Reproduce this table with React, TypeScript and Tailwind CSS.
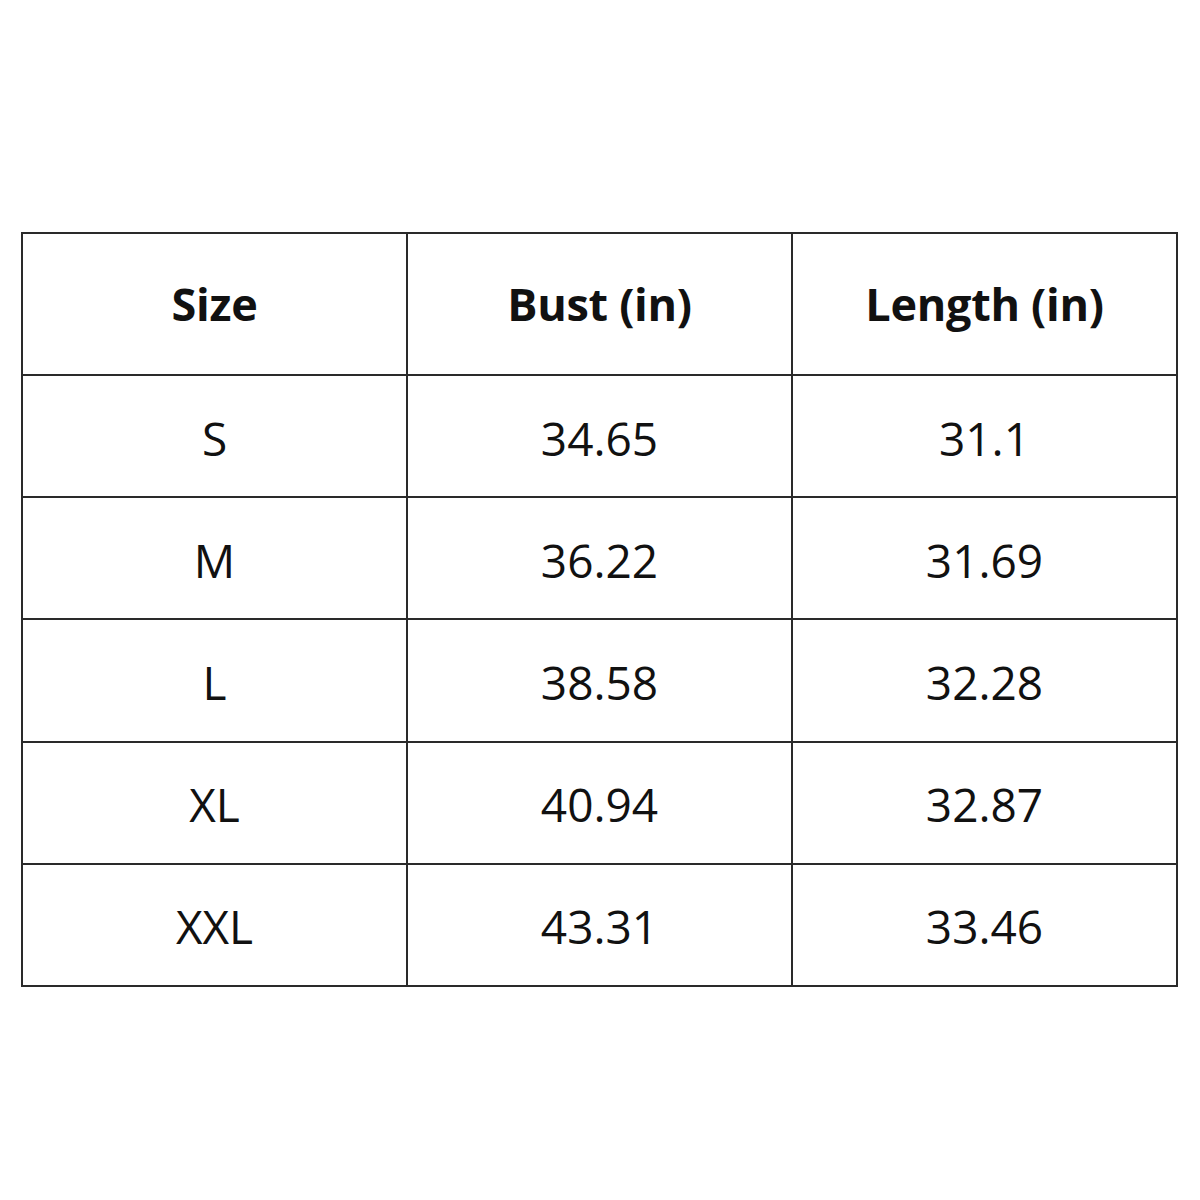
import React from "react";

const rows: [string, string, string][] = [
  ["S", "34.65", "31.1"],
  ["M", "36.22", "31.69"],
  ["L", "38.58", "32.28"],
  ["XL", "40.94", "32.87"],
  ["XXL", "43.31", "33.46"],
];

export default function App() {
  const font = { fontFamily: '"Open Sans", "Noto Sans", sans-serif' };
  return (
    <div className="w-[1200px] h-[1200px] bg-white pt-[232px] pl-[21px]" style={font}>
      <div className="w-[1157px] h-[755px] grid grid-cols-3 grid-rows-[142px_repeat(5,1fr)] border-l-2 border-t-2 border-[#2a2a2a] text-[#111]">
        {["Size", "Bust (in)", "Length (in)"].map((h) => (
          <div
            key={h}
            className="flex items-center justify-center border-r-2 border-b-2 border-[#2a2a2a] text-[45px] font-bold pt-[0px] tracking-[-0.3px]"
          >
            {h}
          </div>
        ))}
        {rows.map((r) =>
          r.map((c, i) => (
            <div
              key={r[0] + i}
              className="flex items-center justify-center border-r-2 border-b-2 border-[#2a2a2a] text-[46px] pt-[4px]"
            >
              {c}
            </div>
          ))
        )}
      </div>
    </div>
  );
}
